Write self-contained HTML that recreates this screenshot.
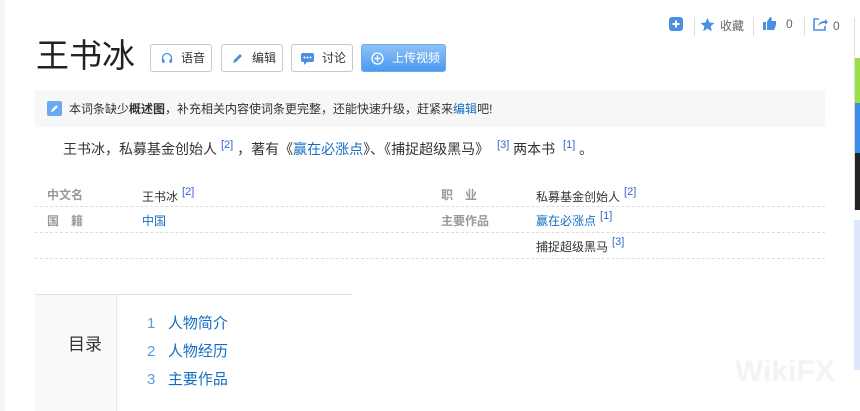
<!DOCTYPE html>
<html><head><meta charset="utf-8"><style>
*{margin:0;padding:0;box-sizing:border-box}
body{width:860px;height:411px;overflow:hidden;background:#fff;font-family:"Liberation Sans","Noto Sans CJK SC",sans-serif;color:#333;position:relative;font-size:12px}
.a{position:absolute;white-space:nowrap}
.btn{position:absolute;top:44px;height:28px;border:1px solid #c8c8c8;border-radius:3px;font-size:12px;color:#333;line-height:26px;padding-left:30px;background:#fff}
.blue{color:#136ec2}
sup{font-size:11px;color:#3366cc;vertical-align:6px;margin-left:4px}
.lbl{color:#999;font-weight:bold;font-size:12px}
.dl{position:absolute;left:35px;width:790px;border-top:1px dashed #ddd}
</style></head><body>
<div class="a" style="left:0;top:0;width:5px;height:411px;background:#f5f5f5"></div>
<svg class="a" style="left:669px;top:17px" width="14" height="14"><rect width="14" height="14" rx="3" fill="#4a90e2"/><path d="M7 3.5v7M3.5 7h7" stroke="#fff" stroke-width="2"/></svg>
<div class="a" style="left:694px;top:17px;width:1px;height:19px;background:#ddd"></div>
<svg class="a" style="left:700px;top:17px" width="15" height="15"><path d="M7.5 1l2 4.5 5 .5-3.8 3.3 1.1 4.9-4.3-2.6-4.3 2.6 1.1-4.9L.5 6l5-.5z" fill="#4a90e2"/></svg>
<div class="a" style="left:720px;top:17px;color:#666">收藏</div>
<div class="a" style="left:753px;top:17px;width:1px;height:19px;background:#ddd"></div>
<svg class="a" style="left:762px;top:16px" width="15" height="15"><path d="M1 6h3v8H1zM5 6l3-5c2 0 2 2 1.5 4H14v4l-2 5H5z" fill="#4a90e2"/></svg>
<div class="a" style="left:786px;top:17px;color:#666">0</div>
<div class="a" style="left:804px;top:17px;width:1px;height:19px;background:#ddd"></div>
<svg class="a" style="left:813px;top:17px" width="15" height="14"><path d="M6 2H1v11h11V9" fill="none" stroke="#4a90e2" stroke-width="1.6"/><path d="M5 9c1-4 4-5 7-5V2l3 3-3 3V6c-3 0-5 1-7 3z" fill="#4a90e2"/></svg>
<div class="a" style="left:833px;top:19px;color:#666">0</div>
<div class="a" style="left:854px;top:18px;width:6px;height:192px;border-left:1px solid #ddd"></div>
<div class="a" style="left:855px;top:58px;width:5px;height:45px;background:#9be04a"></div>
<div class="a" style="left:855px;top:103px;width:5px;height:50px;background:#3a8ee8"></div>
<div class="a" style="left:855px;top:153px;width:5px;height:57px;background:#222"></div>
<div class="a" style="left:854px;top:220px;width:6px;height:150px;background:#dbe9fa"></div>
<div class="a" style="left:36px;top:34px;font-size:33px;color:#222;line-height:44px">王书冰</div>
<div class="btn" style="left:150px;width:62px"><svg class="a" style="left:10px;top:7px" width="12" height="12"><path d="M1.5 9V6a4.5 4.5 0 019 0v3" fill="none" stroke="#4a90e2" stroke-width="1.3"/><rect x="1" y="7" width="2.5" height="4" rx="1" fill="#4a90e2"/><rect x="8.5" y="7" width="2.5" height="4" rx="1" fill="#4a90e2"/></svg>语音</div>
<div class="btn" style="left:221px;width:62px"><svg class="a" style="left:9px;top:7px" width="13" height="13"><path d="M2 11l1-3 6-6 2 2-6 6z" fill="#4a90e2"/></svg>编辑</div>
<div class="btn" style="left:291px;width:62px"><svg class="a" style="left:9px;top:7px" width="13" height="13"><rect x="0" y="1" width="13" height="9" rx="2" fill="#4a90e2"/><path d="M3 10v3l3-3z" fill="#4a90e2"/><circle cx="3.5" cy="5.5" r="1" fill="#fff"/><circle cx="6.5" cy="5.5" r="1" fill="#fff"/><circle cx="9.5" cy="5.5" r="1" fill="#fff"/></svg>讨论</div>
<div class="btn" style="left:361px;width:85px;background:linear-gradient(#8fc1f5,#4a9af0);border-color:#6aaaf2;color:#fff"><svg class="a" style="left:9px;top:7px" width="13" height="13"><circle cx="6.5" cy="6.5" r="5.5" fill="none" stroke="#fff" stroke-width="1.3"/><path d="M6.5 3.5v6M3.5 6.5h6" stroke="#fff" stroke-width="1.3"/></svg>上传视频</div>
<div class="a" style="left:35px;top:90px;width:790px;height:37px;background:#f7f7f7"></div>
<svg class="a" style="left:47px;top:101px" width="15" height="15"><rect width="15" height="15" rx="2" fill="#6aaaf2"/><path d="M4 11l.7-2.3 4.5-4.5 1.6 1.6-4.5 4.5z" fill="#fff"/></svg>
<div class="a" style="left:69px;top:100px;font-size:12px;color:#333">本词条缺少<b>概述图</b>，补充相关内容使词条更完整，还能快速升级，赶紧来<span class="blue">编辑</span>吧!</div>
<div class="a" style="left:63px;top:139px;font-size:14px;color:#333">王书冰，私募基金创始人<sup>[2]</sup> ，著有《<span class="blue">赢在必涨点</span>》、《捕捉超级黑马》 <sup>[3]</sup> 两本书 <sup>[1]</sup> 。</div>
<div class="a lbl" style="left:47px;top:186px">中文名</div>
<div class="a" style="left:142px;top:186px">王书冰<sup>[2]</sup></div>
<div class="a lbl" style="left:441px;top:186px">职　业</div>
<div class="a" style="left:536px;top:186px">私募基金创始人<sup>[2]</sup></div>
<div class="dl" style="top:206px"></div>
<div class="a lbl" style="left:47px;top:212px">国　籍</div>
<div class="a blue" style="left:142px;top:212px">中国</div>
<div class="a lbl" style="left:441px;top:212px">主要作品</div>
<div class="a" style="left:536px;top:210px"><span class="blue">赢在必涨点</span><sup>[1]</sup></div>
<div class="dl" style="top:232px"></div>
<div class="a" style="left:536px;top:236px">捕捉超级黑马<sup>[3]</sup></div>
<div class="dl" style="top:258px"></div>
<div class="a" style="left:35px;top:294px;width:317px;border-top:1px solid #e0e0e0"></div>
<div class="a" style="left:35px;top:295px;width:82px;height:116px;background:#fafafa;border-right:1px solid #e8e8e8"></div>
<div class="a" style="left:68px;top:330px;font-size:17px;color:#333">目录</div>
<div class="a" style="left:147px;top:310px;font-size:15px;line-height:28px"><span style="color:#5d9de0">1</span>&nbsp;&nbsp;&nbsp;<span class="blue">人物简介</span><br><span style="color:#5d9de0">2</span>&nbsp;&nbsp;&nbsp;<span class="blue">人物经历</span><br><span style="color:#5d9de0">3</span>&nbsp;&nbsp;&nbsp;<span class="blue">主要作品</span></div>
<div class="a" style="left:735px;top:355px;font-size:30px;font-weight:bold;color:#f3f3f3">WikiFX</div>
</body></html>
